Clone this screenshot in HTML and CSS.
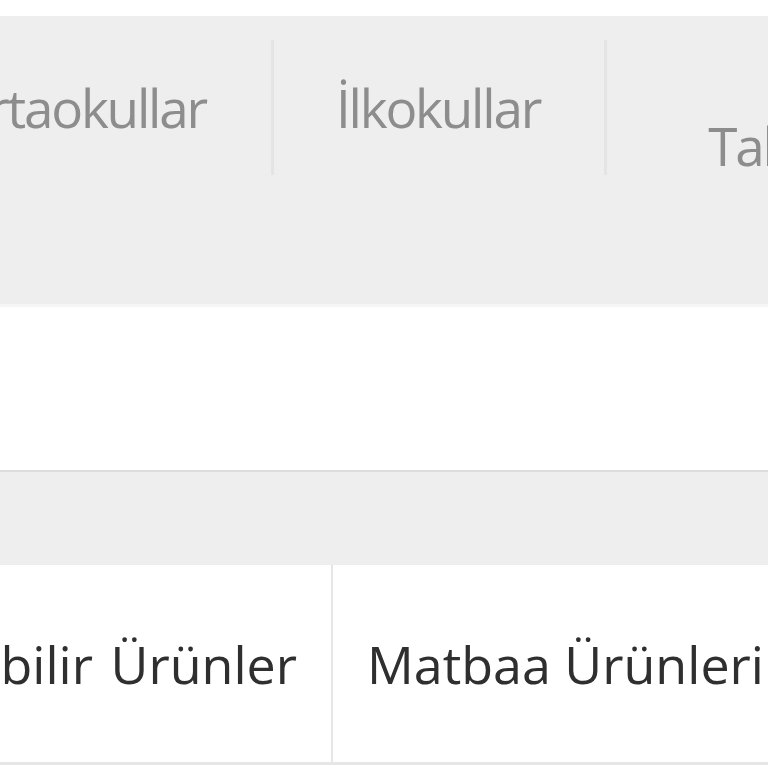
FILE: index.html
```html
<!DOCTYPE html>
<html lang="tr">
<head>
<meta charset="utf-8">
<title>Menü</title>
<link rel="stylesheet" href="styles.css">
</head>
<body>
<div class="page">
  <nav class="school-nav">
    <div class="nav-item nav-item--first"><span>Ortaokullar</span></div>
    <div class="nav-item"><span>İlkokullar</span></div>
    <div class="nav-item nav-item--low"><span>Takvimler</span></div>
  </nav>
  <div class="gap"></div>
  <div class="cat-head"></div>
  <div class="cat-row">
    <div class="cat-item cat-item--first"><span>Kişiselleştirilebilir Ürünler</span></div>
    <div class="cat-item"><span>Matbaa Ürünleri</span></div>
  </div>
</div>
</body>
</html>
```

FILE: styles.css
```css
html, body {
  margin: 0;
  padding: 0;
  background: #ffffff;
  overflow: hidden;
}

.page {
  width: 768px;
  height: 768px;
  overflow: hidden;
  padding-top: 16px;
  box-sizing: border-box;
  font-family: "Open Sans", "Noto Sans", sans-serif;
}

.school-nav {
  display: flex;
  align-items: flex-start;
  height: 291px;
  background: #eeeeee;
  padding-top: 24px;
  box-sizing: border-box;
  border-bottom: 3px solid #f6f6f6;
}

.nav-item {
  flex: none;
  height: 135px;
  box-sizing: border-box;
  border-left: 3px solid #e4e4e4;
  padding: 42px 64px 0 62px;
  font-size: 53px;
  line-height: 52px;
  letter-spacing: -2.2px;
  color: #8d8d8d;
  white-space: nowrap;
}

.nav-item--first {
  width: 271px;
  border-left: none;
  display: flex;
  justify-content: flex-end;
  overflow: hidden;
  padding-left: 0;
  padding-right: 65px;
}

.nav-item--low {
  padding-top: 80px;
  padding-left: 101px;
}

.gap {
  height: 163px;
}

.cat-head {
  height: 93px;
  background: #eeeeee;
  border-top: 2px solid #dddddd;
}

.cat-row {
  display: flex;
  height: 200px;
  border-bottom: 3px solid #e6e6e6;
  box-sizing: border-box;
}

.cat-item {
  flex: none;
  display: flex;
  align-items: center;
  padding: 0 34px;
  border-left: 2px solid #e6e6e6;
  font-size: 52px;
  color: #2f2f2f;
  white-space: nowrap;
}

.cat-item--first {
  width: 331px;
  box-sizing: border-box;
  border-left: none;
  justify-content: flex-end;
  overflow: hidden;
  padding-left: 0;
  word-spacing: 4px;
}
```
